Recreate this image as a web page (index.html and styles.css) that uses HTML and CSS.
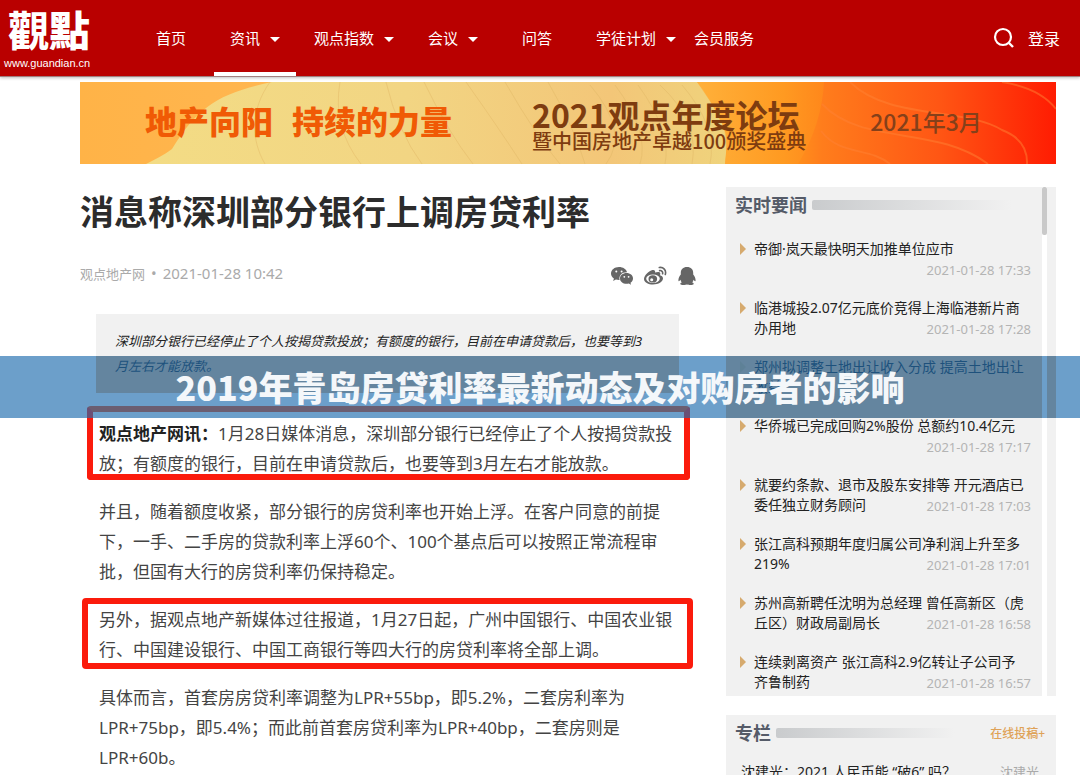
FILE: index.html
```html
<!DOCTYPE html>
<html lang="zh-CN">
<head>
<meta charset="utf-8">
<title>消息称深圳部分银行上调房贷利率</title>
<link rel="stylesheet" href="styles.css">
</head>
<body>
<header class="topbar">
  <a class="logo" href="#"><span class="logo-name">觀點</span><span class="logo-url">www.guandian.cn</span></a>
  <nav class="nav">
    <a class="nav-item nav-plain" href="#">首页</a>
    <a class="nav-item nav-active" href="#">资讯<i class="caret"></i></a>
    <a class="nav-item" href="#">观点指数<i class="caret"></i></a>
    <a class="nav-item" href="#">会议<i class="caret"></i></a>
    <a class="nav-item nav-plain" href="#">问答</a>
    <a class="nav-item" href="#">学徒计划<i class="caret"></i></a>
    <a class="nav-item nav-last" href="#">会员服务</a>
  </nav>
  <div class="account">
    <button class="search" type="button" aria-label="搜索">
      <svg width="22" height="22" viewBox="0 0 22 22"><circle cx="10" cy="10" r="8" fill="none" stroke="#fff" stroke-width="2.200"/><path d="M16 16l4 4" stroke="#fff" stroke-width="2.400"/></svg>
    </button>
    <a class="login" href="#">登录</a>
  </div>
</header>

<div class="page">
  <a class="banner" href="#">
    <svg class="banner-art" viewBox="0 0 976 82" preserveAspectRatio="none" aria-hidden="true">
      <defs>
        <linearGradient id="base" x1="0" x2="1"><stop offset="0" stop-color="#ffb347"/><stop offset=".2" stop-color="#ffb650"/><stop offset=".62" stop-color="#ffb13c"/><stop offset=".72" stop-color="#ff9a1c"/><stop offset=".76" stop-color="#ff7d1c"/><stop offset=".88" stop-color="#ff5614"/><stop offset="1" stop-color="#ff1c02"/></linearGradient>
        <linearGradient id="shell" x1="0" x2="1"><stop offset="0" stop-color="#f3dc85"/><stop offset=".45" stop-color="#f2d583"/><stop offset=".8" stop-color="#f3c678"/><stop offset="1" stop-color="#efd37c"/></linearGradient>
        <linearGradient id="fold" x1="0" x2="1"><stop offset="0" stop-color="#ffb23c"/><stop offset="1" stop-color="#ff8f1a"/></linearGradient>
      </defs>
      <rect width="976" height="82" fill="url(#base)"/>
      <path d="M66 82Q86 72 92 67C118 24 140 11 192 0H617Q630 16 640 38C650 54 646 66 645 82Z" fill="url(#shell)"/>
      <path d="M617 0Q628 16 638 32Q650 55 645 82H718Q742 42 744 0Z" fill="url(#fold)" opacity=".6"/>
      <g fill="none" stroke="#e3ba68" stroke-width="1" opacity=".5">
        <path d="M190 0C170 28 171 58 185 82M260 0Q252 45 281 82M306 0Q318 50 342 82M344 0Q368 50 393 82M386 0Q420 48 442 82M425 0Q456 54 480 82M468 0Q494 45 505 82"/>
        <path d="M510 3Q550 50 526 82M535 3Q570 50 560 82M558 3Q592 50 585 82M580 3Q620 40 612 82M602 3Q638 45 630 82"/>
      </g>
      <g fill="none" stroke="#ff8234" stroke-width="2" opacity=".5">
        <path d="M770 0C808 38 885 25 922 48Q948 58 947 82M742 22C782 64 856 43 908 82M741 49C760 74 790 65 810 82M922 0Q960 6 976 27"/>
      </g>
    </svg>
    <span class="slogan"><span>地产向阳</span><span>持续的力量</span></span>
    <span class="forum"><strong class="forum-name">2021观点年度论坛</strong><span class="forum-sub">暨中国房地产卓越100颁奖盛典</span></span>
    <span class="forum-date">2021年3月</span>
  </a>

  <div class="columns">
    <main class="article">
      <h1 class="title">消息称深圳部分银行上调房贷利率</h1>
      <div class="meta">
        <span class="source">观点地产网</span><span class="dot">•</span><time class="date">2021-01-28 10:42</time>
        <div class="share">
          <a href="#" aria-label="微信"><svg width="22" height="20" viewBox="0 0 22 20" fill="#666"><path d="M8 1C3.500 1 0 3.900 0 7.500c0 2 1.100 3.800 2.900 5L2.200 15l2.700-1.400c1 .3 2 .4 3.100.4h.6C7.500 9.500 11 6 16 6.200 15.300 3.200 12 1 8 1z"/><path d="M15.500 7C11.900 7 9 9.300 9 12.400s2.900 5.400 6.500 5.400c.8 0 1.600-.1 2.300-.3l2.200 1.300-.5-2.100c1.500-1 2.500-2.500 2.500-4.300C22 9.300 19.100 7 15.500 7z"/><g fill="#fff"><circle cx="5.300" cy="5.500" r="1"/><circle cx="10.600" cy="5.500" r="1"/><circle cx="13.300" cy="10.800" r=".9"/><circle cx="17.600" cy="10.800" r=".9"/></g></svg></a>
          <a href="#" aria-label="微博"><svg width="23" height="20" viewBox="0 0 23 20"><path fill="#666" d="M8.500 4C5 4.500 0 9.500 0 13c0 3.500 4.500 5.500 9 5.500 5.500 0 10-3 10-6 0-2-1.500-2.800-3-3.200.7-1.800.3-3-1-3.300-1.200-.3-2.800.1-4 .6C11.500 4.700 10.500 3.600 8.500 4z"/><ellipse cx="9" cy="12.800" rx="6.800" ry="4.200" fill="#fff"/><ellipse cx="8.800" cy="12.900" rx="4.300" ry="3.700" fill="#666"/><circle cx="7.700" cy="13.800" r="1.500" fill="#fff"/><path d="M15.300 1.500c4-.7 7.300 2.700 6 7M15.600 4.600c2-.3 3.500 1.200 3 3.200" fill="none" stroke="#666" stroke-width="1.600" stroke-linecap="round"/></svg></a>
          <a href="#" aria-label="QQ"><svg width="18" height="20" viewBox="0 0 18 20" fill="#666"><path d="M9 1C5 1 2.800 3.500 2.800 7v1.500C1.500 10 .2 12.400.4 14.500c.1 1 .9 1 2.100-.7.2 1 .6 1.900 1.300 2.600-2.800.9-1.400 2.600 1.500 2.600 1.600 0 3-.2 3.700-.8.7.600 2.100.8 3.700.8 2.900 0 4.300-1.700 1.500-2.600.7-.7 1.100-1.600 1.300-2.600 1.200 1.700 2 1.700 2.100.7.200-2.100-1.100-4.500-2.400-6V7c0-3.500-2.200-6-6.200-6z"/></svg></a>
        </div>
      </div>
      <blockquote class="summary">深圳部分银行已经停止了个人按揭贷款投放；有额度的银行，目前在申请贷款后，也要等到3<br>月左右才能放款。</blockquote>
      <div class="body">
        <p class="marked marked-lead"><strong>观点地产网讯：</strong>1月28日媒体消息，深圳部分银行已经停止了个人按揭贷款投放；有额度的银行，目前在申请贷款后，也要等到3月左右才能放款。</p>
        <p>并且，随着额度收紧，部分银行的房贷利率也开始上浮。在客户同意的前提下，一手、二手房的贷款利率上浮60个、100个基点后可以按照正常流程审批，但国有大行的房贷利率仍保持稳定。</p>
        <p class="marked marked-wide">另外，据观点地产新媒体过往报道，1月27日起，广州中国银行、中国农业银行、中国建设银行、中国工商银行等四大行的房贷利率将全部上调。</p>
        <p>具体而言，首套房房贷利率调整为LPR+55bp，即5.2%，二套房利率为LPR+75bp，即5.4%；而此前首套房贷利率为LPR+40bp，二套房则是LPR+60b。</p>
      </div>
    </main>

    <aside class="sidebar">
      <section class="panel panel-news">
        <div class="panel-main">
          <div class="panel-head"><h2>实时要闻</h2><span class="rule"></span></div>
          <ul class="news">
            <li><a href="#">帝御·岚天最快明天加推单位应市</a><time>2021-01-28 17:33</time></li>
            <li><a href="#">临港城投2.07亿元底价竞得上海临港新片商办用地</a><time>2021-01-28 17:28</time></li>
            <li><a href="#">郑州拟调整土地出让收入分成 提高土地出让收益</a></li>
            <li><a href="#">华侨城已完成回购2%股份 总额约10.4亿元</a><time>2021-01-28 17:17</time></li>
            <li><a href="#">就要约条款、退市及股东安排等 开元酒店已委任独立财务顾问</a><time>2021-01-28 17:03</time></li>
            <li><a href="#">张江高科预期年度归属公司净利润上升至多219%</a><time>2021-01-28 17:01</time></li>
            <li><a href="#">苏州高新聘任沈明为总经理 曾任高新区（虎丘区）财政局副局长</a><time>2021-01-28 16:58</time></li>
            <li><a href="#">连续剥离资产 张江高科2.9亿转让子公司予齐鲁制药</a><time>2021-01-28 16:57</time></li>
          </ul>
        </div>
        <div class="track"><div class="thumb"></div></div>
      </section>
      <section class="panel panel-column">
        <div class="panel-head"><h2>专栏</h2><span class="rule"></span><a class="submit" href="#">在线投稿+</a></div>
        <div class="column-row"><a href="#">沈建光：2021 人民币能 “破6” 吗？</a><span>沈建光</span></div>
      </section>
    </aside>
  </div>
</div>
<div class="ribbon">2019年青岛房贷利率最新动态及对购房者的影响</div>
</body>
</html>
```

FILE: styles.css
```css
* { box-sizing: border-box; }
html { overflow: hidden; }
body {
  position: relative;
  margin: 0;
  background: #fff;
  color: #333;
  font-family: "Noto Sans", "Noto Sans CJK SC", sans-serif;
  font-size: 14px;
}
a { color: inherit; text-decoration: none; }
h1, h2, p, ul, blockquote { margin: 0; padding: 0; }

/* Top bar */
.topbar {
  display: flex;
  height: 77px;
  background: #b90000;
  border-bottom: 1px solid #a08080;
  box-shadow: 0 1px 3px rgba(0, 0, 0, .25);
  color: #fff;
}
.logo {
  display: flex;
  flex-direction: column;
  width: 130px;
  padding-left: 4px;
}
.logo-name {
  padding-left: 4px;
  font: 900 41px/56px "Noto Sans CJK TC", sans-serif;
}
.logo-url { font: 11px/14px "Liberation Sans", sans-serif; }
.nav { display: flex; gap: 2px; }
.nav-item {
  display: flex;
  align-items: center;
  gap: 10px;
  padding: 2px 16px 0;
  border-bottom: 4px solid transparent;
  font-size: 15px;
  white-space: nowrap;
}
.nav-plain { padding: 2px 26px 0; }
.nav-last { padding: 2px 0 0; }
.nav-active { border-bottom-color: #fff; }
.caret {
  margin-top: 5px;
  border: 5px solid transparent;
  border-top-color: #fff;
  border-bottom: 0;
}
.account {
  display: flex;
  align-items: center;
  gap: 13px;
  margin-left: auto;
  padding-right: 20px;
  font-size: 16px;
}
.search {
  display: flex;
  padding: 0;
  border: 0;
  background: none;
}

/* Banner */
.page { padding: 5px 24px 0 80px; }
.banner {
  position: relative;
  display: flex;
  align-items: center;
  height: 82px;
  padding-left: 65px;
  overflow: hidden;
  font-family: "Noto Sans CJK SC", sans-serif;
  white-space: nowrap;
}
.banner-art {
  position: absolute;
  inset: 0;
  width: 100%;
  height: 100%;
}
.slogan, .forum, .forum-date { position: relative; }
.slogan {
  display: flex;
  gap: 19px;
  padding-bottom: 6px;
  color: #f05a05;
  font-size: 32px;
  font-weight: 900;
}
.forum {
  display: flex;
  flex-direction: column;
  margin-left: 80px;
  padding-top: 3px;
  color: #7e3c10;
}
.forum-name { font-size: 32px; line-height: 32px; }
.forum-sub { font-size: 20px; font-weight: 500; line-height: 22px; }
.forum-date {
  margin-left: 64px;
  padding-bottom: 4px;
  color: #85401a;
  font-size: 23px;
  font-weight: 500;
}

/* Article */
.columns { display: flex; padding-top: 23px; }
.article { flex: 1; min-width: 0; padding-right: 30px; }
.title {
  color: #2c2c2c;
  font-size: 34px;
  line-height: 50px;
  white-space: nowrap;
}
.meta {
  display: flex;
  align-items: center;
  height: 24px;
  margin-top: 24px;
  color: #aaa;
  font-size: 13px;
}
.dot { margin: 0 6px; font-size: 15px; }
.date { font-size: 15px; }
.share { display: flex; gap: 11px; margin: 6px 0 0 auto; }
.share a { display: flex; }
.summary {
  margin: 29px 17px 0 16px;
  padding: 15px 0 14px 19px;
  background: linear-gradient(#f1f1f1 42px, #e7b483 42px);
  color: #222;
  font-size: 13px;
  font-style: italic;
  line-height: 25px;
}
.body {
  display: flex;
  flex-direction: column;
  gap: 18px;
  padding: 26px 14px 0 19px;
  color: #444;
  font-size: 17px;
  line-height: 30px;
}
.body strong { color: #222; }
.marked { position: relative; }
.marked::before {
  content: "";
  position: absolute;
  inset: -13px -8px -1px -12px;
  border: 6px solid #fb1b0c;
  border-radius: 4px;
}
.marked-lead::before { border-top-color: #fb4700; }
.marked-wide::before { inset: -7px -11px -4px -17px; }

/* Sidebar */
.sidebar { width: 330px; flex: none; }
.panel { background: #f1f1f1; }
.panel-news {
  display: flex;
  padding-right: 9px;
  background: linear-gradient(#f1f1f1 169px, #e7b483 169px 231px, #f1f1f1 231px);
}
.panel-main { flex: 1; padding-bottom: 2px; }
.panel-head {
  display: flex;
  align-items: center;
  gap: 5px;
  padding: 6px 0 0 9px;
}
.panel-head h2 {
  color: #555b68;
  font-size: 18px;
  line-height: 24px;
}
.rule {
  flex: 1;
  height: 10px;
  margin-right: 30px;
  border-radius: 2px;
  background: linear-gradient(90deg, #c9cbcd, #f1f1f1);
}
.news {
  display: flex;
  flex-direction: column;
  gap: 17px;
  padding: 22px 16px 0 28px;
  list-style: none;
  line-height: 20px;
}
.news li { position: relative; min-height: 42px; }
.news li::before {
  content: "";
  position: absolute;
  top: 4px;
  left: -14px;
  border: 6px solid transparent;
  border-left-color: #d6aa6e;
  border-right: 0;
}
.news a { color: #222; }
.news time {
  float: right;
  margin-right: -5px;
  color: #b4b4b4;
  font-size: 13px;
  line-height: 22px;
}
.track { width: 5px; background: #fff; }
.thumb { height: 48px; border-radius: 2px; background: #c9c9c9; }
.panel-column { margin-top: 19px; padding-right: 11px; }
.submit { color: #dfa257; font-size: 12px; font-weight: 500; }
.column-row {
  display: flex;
  justify-content: space-between;
  padding: 17px 6px 0 15px;
  color: #222;
  line-height: 20px;
}
.column-row span { color: #aaa; font-size: 13px; }

/* Headline ribbon across the page */
.ribbon {
  position: absolute;
  top: 356px;
  left: 0;
  right: 0;
  background: rgba(29, 107, 174, .65);
  color: #f4f7fa;
  font: 900 34px/62px "Noto Sans CJK SC", sans-serif;
  text-align: center;
  white-space: nowrap;
}
```
